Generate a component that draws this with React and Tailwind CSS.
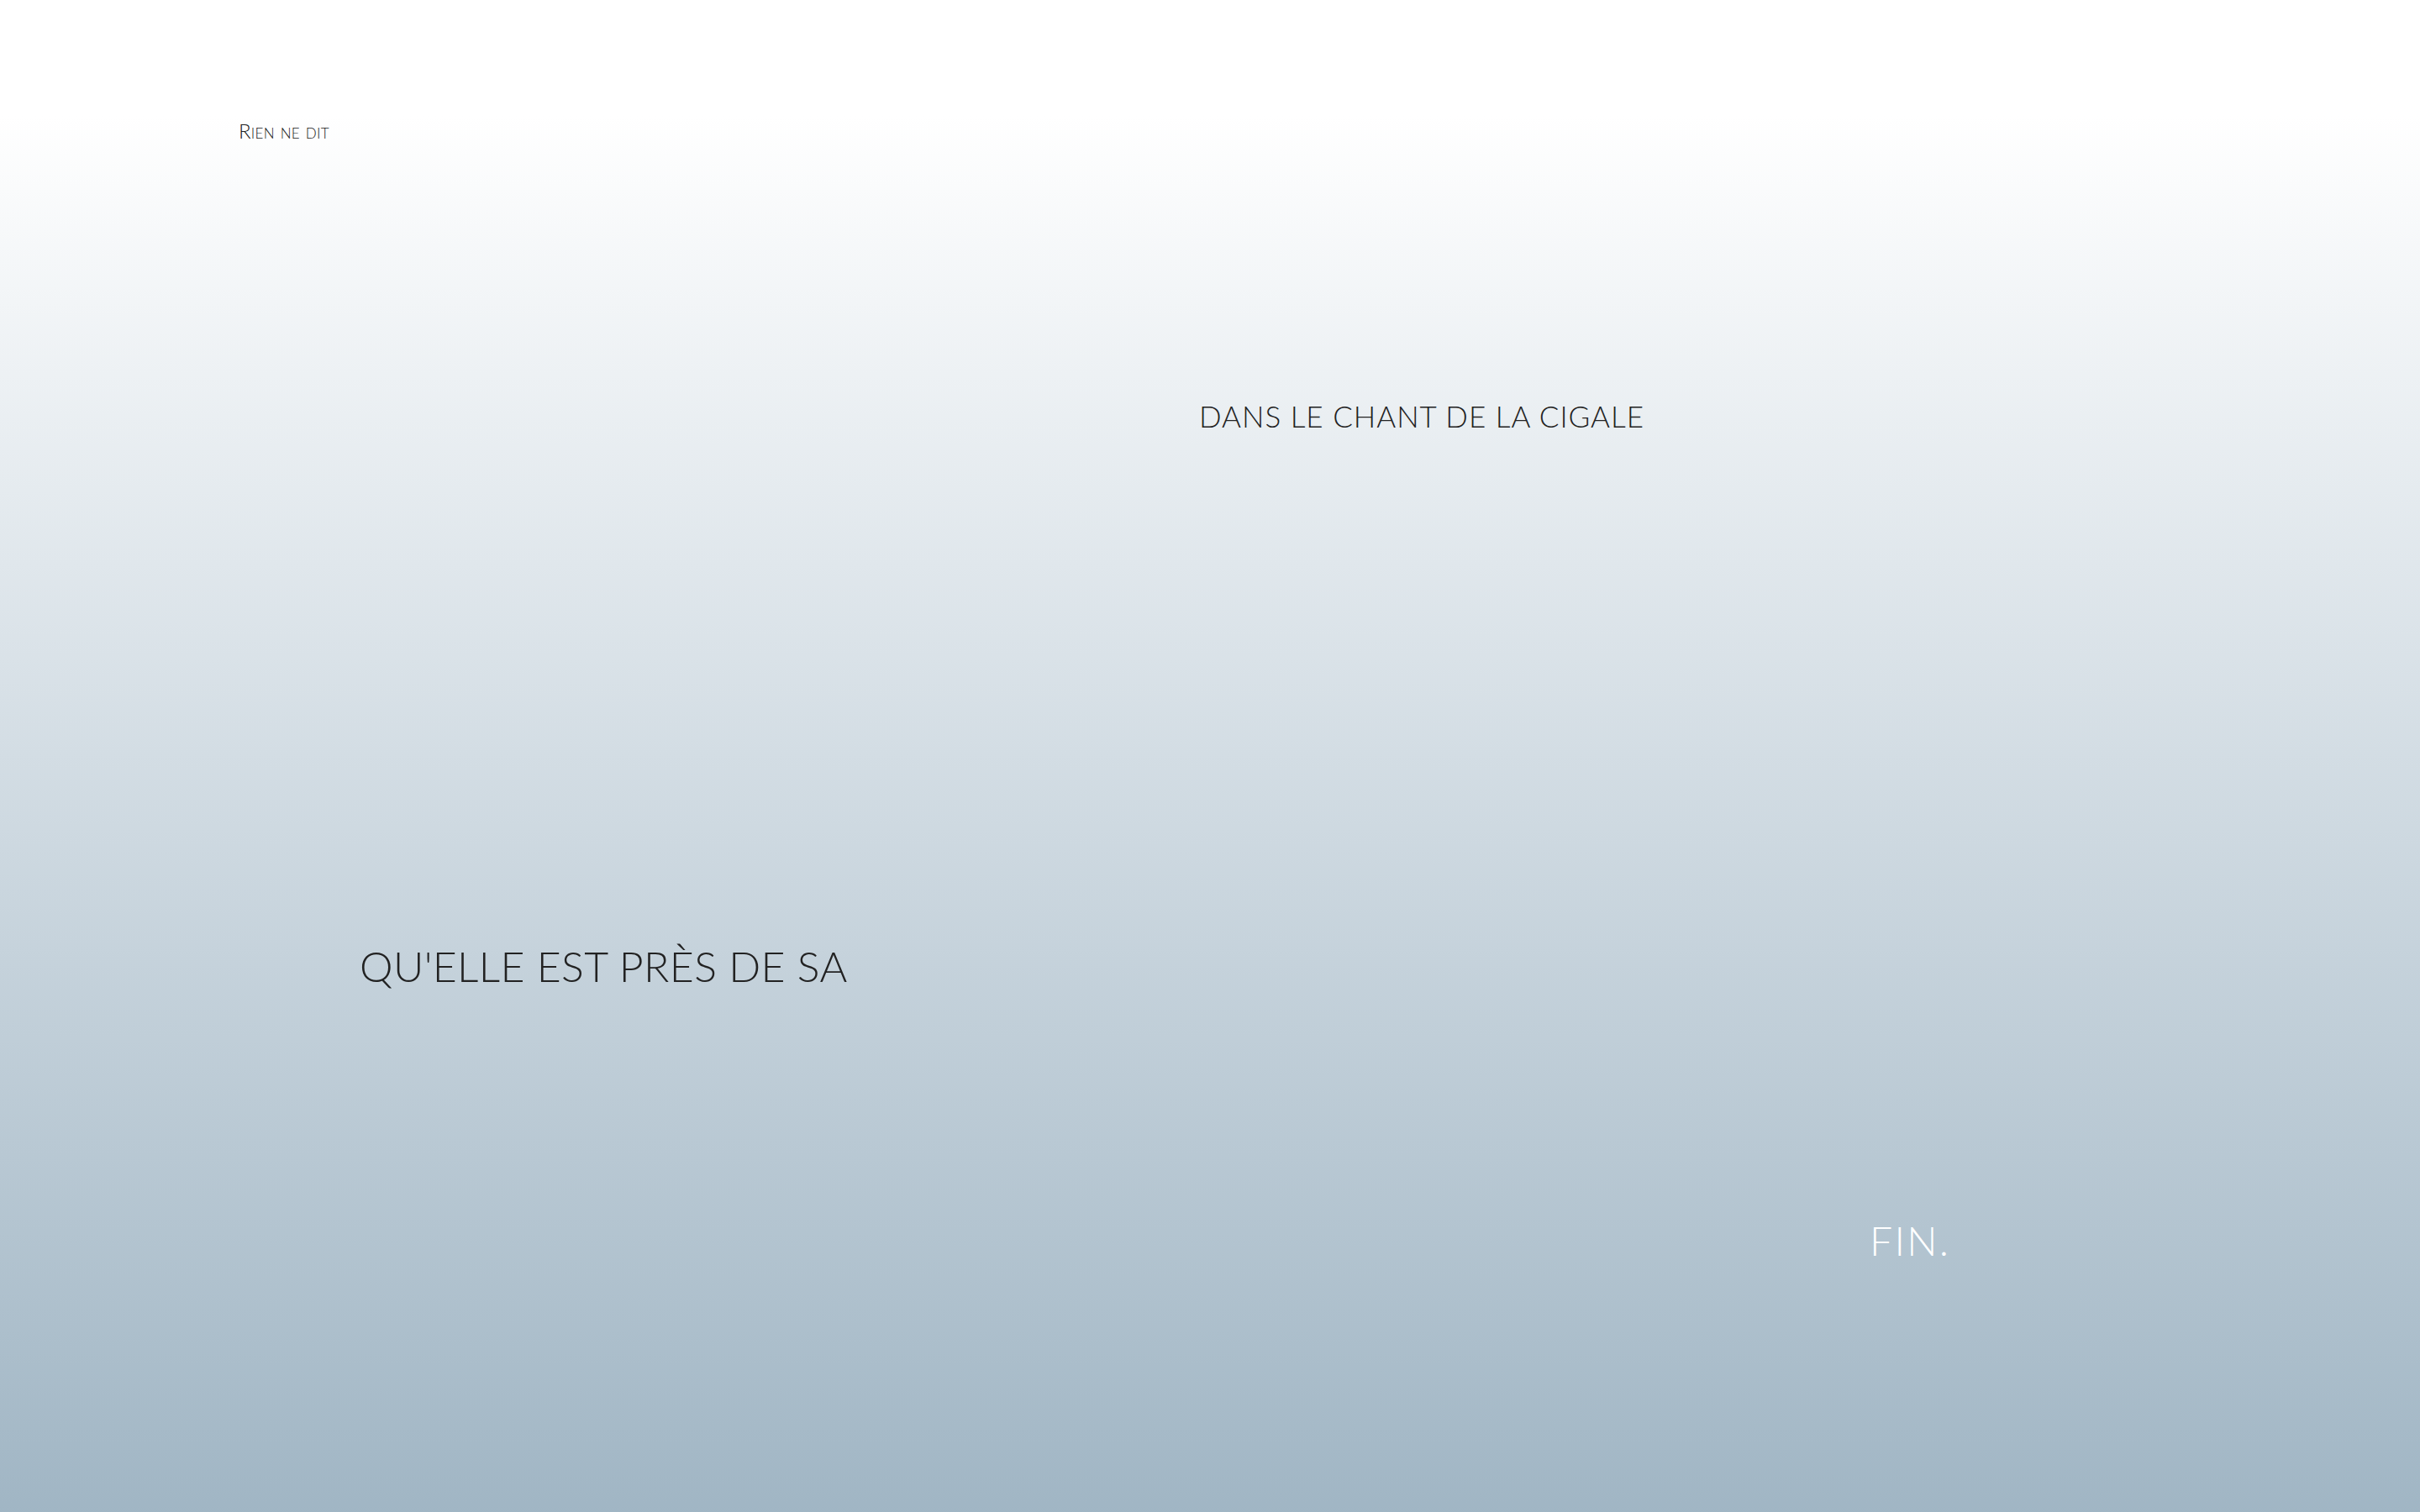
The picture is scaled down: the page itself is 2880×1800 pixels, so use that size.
export default function App() {
  return (
    <div className="min-h-[1954px] bg-linear-to-b from-white from-7% to-[#98afbf] font-['Lato',sans-serif] font-light leading-none">
      <div className="flex flex-col pt-[144px]">
        <p className="pl-[284px] text-[24px] [font-variant:small-caps] tracking-[0.3px] text-[#222]">Rien ne dit</p>
        <p className="pl-[1427px] mt-[310px] text-[35px] tracking-[1px] text-[#222]">DANS LE CHANT DE LA CIGALE</p>
        <p className="pl-[428px] mt-[612px] text-[50px] tracking-[0.35px] text-[#222]">QU'ELLE EST PRÈS DE SA</p>
        <p className="pl-[2225px] mt-[278px] text-[48px] tracking-[2.3px] text-white">FIN.</p>
      </div>
    </div>
  );
}
